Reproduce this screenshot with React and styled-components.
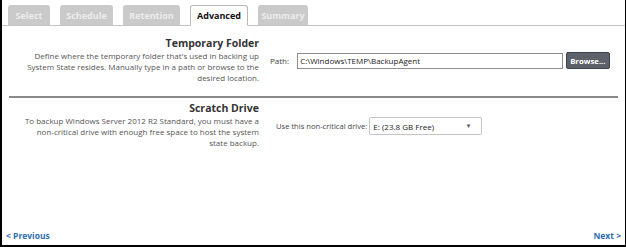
import styled, { createGlobalStyle } from "styled-components";

const GlobalStyle = createGlobalStyle`
  html, body {
    margin: 0;
    padding: 0;
    background: #fff;
  }
  body {
    font-family: "Open Sans", "Liberation Sans", sans-serif;
  }
`;

const Frame = styled.div`
  width: 626px;
  height: 247px;
  box-sizing: border-box;
  border-left: 2px solid #000;
  border-right: 1px solid #000;
  border-bottom: 2px solid #000;
  display: flex;
  flex-direction: column;
  background: #fff;
`;

const TabBar = styled.div`
  display: flex;
  align-items: flex-end;
  gap: 10px;
  height: 25px;
  padding-left: 6px;
  border-bottom: 1px solid #c4c4c4;
`;

const Tab = styled.div`
  box-sizing: border-box;
  width: ${(p) => p.w}px;
  height: 21px;
  margin-bottom: -1px;
  display: flex;
  align-items: center;
  justify-content: center;
  font-size: 9px;
  font-weight: 700;
  border-radius: 3px 3px 0 0;
  background: ${(p) => (p.active ? "#fff" : "#cacaca")};
  color: ${(p) => (p.active ? "#111" : "#ececec")};
  border: 1px solid ${(p) => (p.active ? "#b8b8b8" : "#cacaca")};
  border-bottom-color: ${(p) => (p.active ? "#fff" : "#c4c4c4")};
`;

const Content = styled.div`
  flex: 1;
  display: flex;
  flex-direction: column;
  padding: 0 7px;
`;

const Section = styled.div`
  display: flex;
  padding: ${(p) => p.pad};
  border-bottom: ${(p) => (p.divider ? "2px solid #8a8a8a" : "none")};
`;

const Info = styled.div`
  width: 250px;
  text-align: right;
  flex-shrink: 0;
`;

const Heading = styled.div`
  font-size: 10.5px;
  font-weight: 700;
  color: #333;
  line-height: 14px;
`;

const Desc = styled.div`
  font-size: 8px;
  color: #555;
  line-height: 11px;
`;

const Controls = styled.div`
  display: flex;
  align-items: center;
  gap: ${(p) => p.gap}px;
  padding-left: ${(p) => p.indent}px;
  padding-top: ${(p) => p.top}px;
  align-self: flex-start;
`;

const Label = styled.span`
  font-size: ${(p) => p.size || 8}px;
  color: #444;
  white-space: nowrap;
`;

const PathInput = styled.div`
  box-sizing: border-box;
  width: 266px;
  height: 16px;
  border: 1px solid #8e8e8e;
  font-size: 8px;
  color: #222;
  padding: 0 2px;
  display: flex;
  align-items: center;
`;

const Button = styled.div`
  box-sizing: border-box;
  height: 17px;
  padding: 0 3px;
  margin-left: -5px;
  background: #5d6169;
  border: 1px solid #3e4148;
  border-radius: 2px;
  color: #fff;
  font-size: 7.8px;
  font-weight: 700;
  display: flex;
  align-items: center;
`;

const Select = styled.div`
  box-sizing: border-box;
  width: 113px;
  height: 18px;
  border: 1px solid #c4c4c4;
  border-radius: 2px;
  background: #fff;
  font-size: 8px;
  color: #222;
  padding: 0 10px 0 3px;
  display: flex;
  align-items: center;
  justify-content: space-between;
`;

const Caret = styled.span`
  font-size: 6px;
  color: #555;
`;

const Footer = styled.div`
  display: flex;
  justify-content: space-between;
  padding: 0 4px 4px 4px;
`;

const NavLink = styled.span`
  font-size: 8.5px;
  font-weight: 700;
  color: #2d6db3;
`;

const tabs = [
  { label: "Select", w: 42 },
  { label: "Schedule", w: 53 },
  { label: "Retention", w: 57 },
  { label: "Advanced", w: 58, active: true },
  { label: "Summary", w: 50 },
];

export default function App() {
  return (
    <>
      <GlobalStyle />
      <Frame>
        <TabBar>
          {tabs.map((t) => (
            <Tab key={t.label} w={t.w} active={t.active}>
              {t.label}
            </Tab>
          ))}
        </TabBar>
        <Content>
          <Section divider pad="10px 0 13px 0">
            <Info>
              <Heading>Temporary Folder</Heading>
              <Desc>
                Define where the temporary folder that's used in backing up
                <br />
                System State resides. Manually type in a path or browse to the
                <br />
                desired location.
              </Desc>
            </Info>
            <Controls indent={11} gap={8} top={16}>
              <Label>Path:</Label>
              <PathInput>C:\Windows\TEMP\BackupAgent</PathInput>
              <Button>Browse...</Button>
            </Controls>
          </Section>
          <Section pad="3px 0 0 0">
            <Info>
              <Heading>Scratch Drive</Heading>
              <Desc>
                To backup Windows Server 2012 R2 Standard, you must have a
                <br />
                non-critical drive with enough free space to host the system
                <br />
                state backup.
              </Desc>
            </Info>
            <Controls indent={17} gap={2} top={16}>
              <Label size={7.6}>Use this non-critical drive:</Label>
              <Select>
                E: (23.8 GB Free)
                <Caret>▼</Caret>
              </Select>
            </Controls>
          </Section>
        </Content>
        <Footer>
          <NavLink>&lt; Previous</NavLink>
          <NavLink>Next &gt;</NavLink>
        </Footer>
      </Frame>
    </>
  );
}
